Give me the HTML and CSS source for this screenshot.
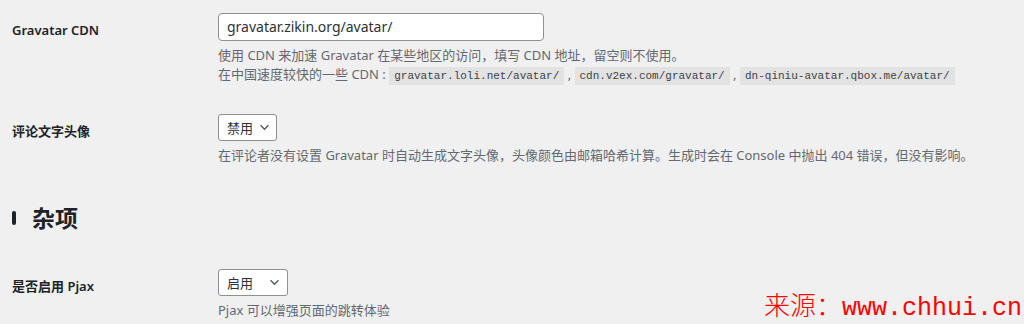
FILE: index.html
```html
<!DOCTYPE html>
<html lang="zh-CN">
<head>
    <meta charset="UTF-8">
    <meta name="viewport" content="width=device-width, initial-scale=1.0">
    <title>主题设置</title>
    <link rel="stylesheet" href="styles.css">
</head>
<body>
    <div class="settings">
        <!-- Gravatar CDN -->
        <div class="row">
            <div class="label">Gravatar CDN</div>
            <div class="field">
                <div class="text-input">gravatar.zikin.org/avatar/</div>
                <p class="desc">使用 CDN 来加速 Gravatar 在某些地区的访问，填写 CDN 地址，留空则不使用。<br>在中国速度较快的一些 CDN : <code>gravatar.loli.net/avatar/</code> , <code>cdn.v2ex.com/gravatar/</code> , <code>dn-qiniu-avatar.qbox.me/avatar/</code></p>
            </div>
        </div>

        <!-- 评论文字头像 -->
        <div class="row row-gap">
            <div class="label">评论文字头像</div>
            <div class="field">
                <div class="select">
                    <span>禁用</span>
                    <svg class="chevron" viewBox="0 0 12 8" width="12" height="8"><path d="M1.5 1.5 6 6l4.5-4.5" fill="none" stroke="#50575e" stroke-width="1.5"/></svg>
                </div>
                <p class="desc">在评论者没有设置 Gravatar 时自动生成文字头像，头像颜色由邮箱哈希计算。生成时会在 Console 中抛出 404 错误，但没有影响。</p>
            </div>
        </div>

        <h2 class="section-title">杂项</h2>

        <!-- Pjax -->
        <div class="row">
            <div class="label">是否启用 Pjax</div>
            <div class="field">
                <div class="select select-wide">
                    <span>启用</span>
                    <svg class="chevron" viewBox="0 0 12 8" width="12" height="8"><path d="M1.5 1.5 6 6l4.5-4.5" fill="none" stroke="#50575e" stroke-width="1.5"/></svg>
                </div>
                <p class="desc">Pjax 可以增强页面的跳转体验</p>
            </div>
        </div>
    </div>

    <div class="watermark">来源：<span class="wm-url">www.chhui.cn</span></div>
</body>
</html>
```

FILE: styles.css
```css
:root {
    --bg: #f0f0f1;
    --text: #1d2327;
    --muted: #646970;
    --border: #8c8f94;
}

* {
    margin: 0;
    padding: 0;
    box-sizing: border-box;
}

body {
    background: var(--bg);
    color: var(--text);
    font-family: 'Noto Sans', 'Noto Sans CJK SC', sans-serif;
    font-size: 13px;
    overflow: hidden;
}

.settings {
    padding: 13px 12px 0;
}

/* 设置行 */
.row {
    display: grid;
    grid-template-columns: 206px 1fr;
    align-items: start;
}

.row-gap {
    margin-top: 28px;
}

.label {
    padding-top: 8px;
    line-height: 19px;
    font-weight: 600;
}

.text-input {
    width: 326px;
    height: 28px;
    padding: 0 8px;
    line-height: 26px;
    font-size: 14px;
    color: #2c3338;
    background: white;
    border: 1px solid var(--border);
    border-radius: 4px;
}

.select {
    display: inline-flex;
    align-items: center;
    gap: 6px;
    height: 27px;
    padding: 0 6px 0 8px;
    font-size: 13px;
    color: #2c3338;
    background: white;
    border: 1px solid var(--border);
    border-radius: 3px;
}

.select-wide {
    width: 70px;
    justify-content: space-between;
    padding-right: 7px;
}

.chevron {
    display: block;
    width: 11px;
    height: 7px;
}

.desc {
    margin-top: 5px;
    line-height: 19px;
    color: var(--muted);
}

code {
    font-family: 'Liberation Mono', monospace;
    font-size: 11px;
    padding: 3px 5px;
    color: #3c434a;
    background: #e2e2e2;
}

/* 分组标题 */
.section-title {
    display: flex;
    align-items: center;
    gap: 16px;
    margin: 37px 0 35px;
    line-height: 32px;
    font-size: 23px;
    font-weight: 700;
}

.section-title::before {
    content: '';
    width: 4px;
    height: 14px;
    border-radius: 2px;
    background: var(--text);
}

/* 水印 */
.watermark {
    position: absolute;
    right: 2px;
    bottom: 0;
    line-height: 30px;
    font-family: 'Noto Sans CJK SC', sans-serif;
    font-size: 26px;
    font-weight: 300;
    color: #ff0000;
}

.wm-url {
    font-family: 'Liberation Mono', monospace;
    font-size: 25px;
}
```
